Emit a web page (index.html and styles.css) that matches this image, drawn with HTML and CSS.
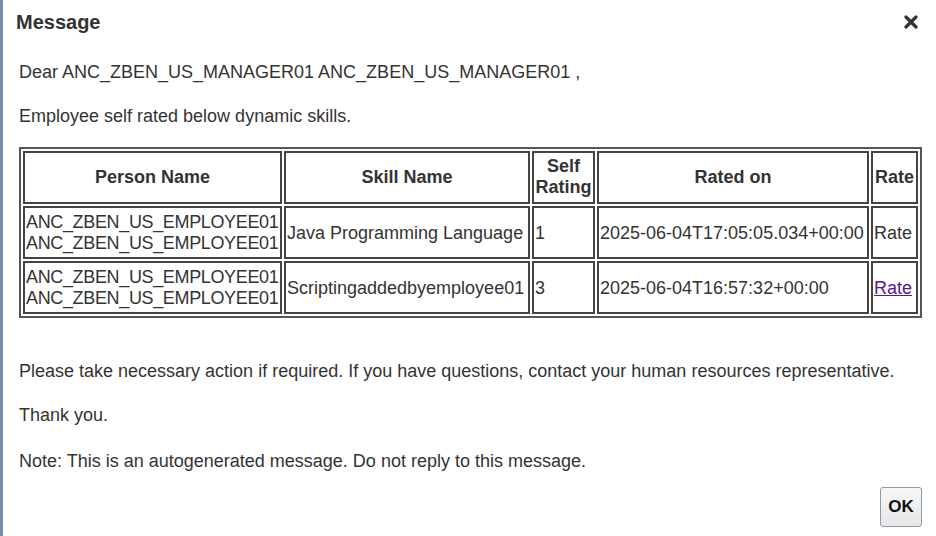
FILE: index.html
```html
<!DOCTYPE html>
<html lang="en">
<head>
  <meta charset="UTF-8" />
  <title>Message</title>
  <link rel="stylesheet" href="styles.css">
</head>
<body>
  <div class="dialog">
    <!-- HEADER -->
    <div class="dialog-header">
      <h1>Message</h1>
      <span class="close-btn" title="Close">
        <svg width="14" height="14" viewBox="0 0 14 14"><path d="M2 2 L12 12 M12 2 L2 12" stroke="#333" stroke-width="3.2" stroke-linecap="round"/></svg>
      </span>
    </div>

    <!-- BODY -->
    <div class="dialog-body">
      <p>Dear ANC_ZBEN_US_MANAGER01 ANC_ZBEN_US_MANAGER01 ,</p>
      <p>Employee self rated below dynamic skills.</p>

      <table class="skills">
        <tr>
          <th class="c-person">Person Name</th>
          <th class="c-skill">Skill Name</th>
          <th class="c-self">Self Rating</th>
          <th class="c-date">Rated on</th>
          <th class="c-rate">Rate</th>
        </tr>
        <tr>
          <td>ANC_ZBEN_US_EMPLOYEE01 ANC_ZBEN_US_EMPLOYEE01</td>
          <td>Java Programming Language</td>
          <td>1</td>
          <td>2025-06-04T17:05:05.034+00:00</td>
          <td>Rate</td>
        </tr>
        <tr>
          <td>ANC_ZBEN_US_EMPLOYEE01 ANC_ZBEN_US_EMPLOYEE01</td>
          <td>Scriptingaddedbyemployee01</td>
          <td>3</td>
          <td>2025-06-04T16:57:32+00:00</td>
          <td><a href="#">Rate</a></td>
        </tr>
      </table>

      <p class="after-table">Please take necessary action if required. If you have questions, contact your human resources representative.</p>
      <p>Thank you.</p>
      <p class="note">Note: This is an autogenerated message. Do not reply to this message.</p>
    </div>

    <!-- FOOTER -->
    <div class="dialog-footer">
      <button class="ok-btn">OK</button>
    </div>
  </div>
</body>
</html>
```

FILE: styles.css
```css
body {
  margin: 0;
  font-family: "Liberation Sans", Arial, sans-serif;
  color: #333;
  background: #fff;
}

.dialog {
  border-left: 3px solid #7b8ca5;
  height: 536px;
  box-sizing: border-box;
  overflow: hidden;
}

/* HEADER */
.dialog-header {
  height: 44px;
  display: flex;
  align-items: center;
  justify-content: space-between;
  padding: 0 18px 0 13px;
}

.dialog-header h1 {
  margin: 0;
  font-size: 20px;
  font-weight: bold;
  color: #333;
}

.close-btn {
  display: flex;
  cursor: pointer;
}

/* BODY */
.dialog-body {
  padding: 0 14px 0 16px;
  font-size: 18px;
  line-height: 21px;
}

.dialog-body p {
  margin: 18px 0 23px;
}

.dialog-body p + p {
  margin-top: 23px;
}

.after-table {
  padding-top: 25px;
}

.dialog-body .note {
  margin-top: 25px;
}

.skills {
  width: 903px;
  table-layout: fixed;
  border: 2px solid #555;
  border-spacing: 2px;
  margin-top: -3px;
  color: #333;
}

.skills th,
.skills td {
  border: 2px solid #444;
  padding: 4px 1px 3px;
  box-sizing: border-box;
  vertical-align: middle;
}

.skills th {
  font-weight: bold;
  text-align: center;
  padding: 3px 1px 4px;
}

.skills td {
  text-align: left;
  white-space: nowrap;
}

.skills td:first-child {
  white-space: normal;
  letter-spacing: -0.35px;
}

.skills a {
  color: #551a8b;
}

.c-person { width: 259px; }
.c-skill { width: 246px; }
.c-self { width: 63px; }
.c-date { width: 272px; }
.c-rate { width: 47px; }

/* FOOTER */
.dialog-footer {
  display: flex;
  justify-content: flex-end;
  padding: 0 14px 0 0;
  margin-top: -8px;
}

.ok-btn {
  width: 42px;
  height: 40px;
  font-family: "Liberation Sans", Arial, sans-serif;
  font-size: 17px;
  font-weight: bold;
  color: #111;
  background: linear-gradient(#f7f7f7, #e6e6e6);
  border: 1px solid #8a9bb0;
  border-radius: 3px;
  padding: 0;
  cursor: pointer;
}
```
